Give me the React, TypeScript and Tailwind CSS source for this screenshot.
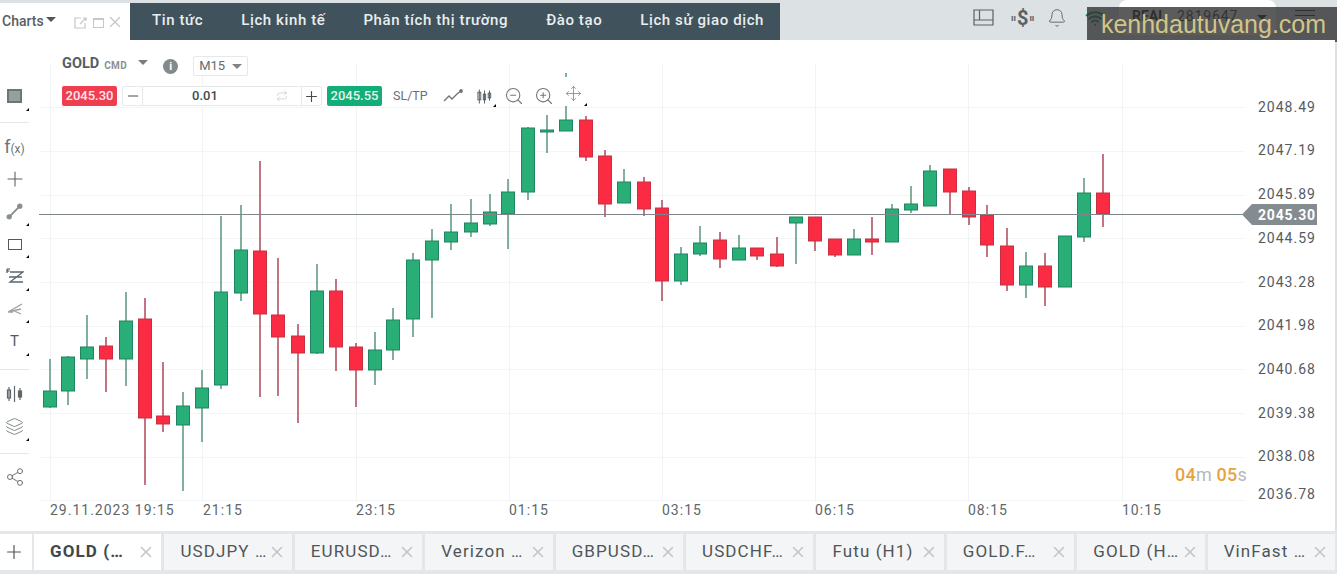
import { Bell, Layers, Minus, Move, Plus, Repeat, Share2, Wifi, X, ZoomIn, ZoomOut } from 'lucide-react'
import type { ReactNode } from 'react'

// cx, high, bodyTop, bodyBottom, low, colour
const candles: [number, number, number, number, number, 'g' | 'r'][] = [
  [50, 359, 391, 407, 408, 'g'],
  [68, 356, 357, 391, 405, 'g'],
  [87, 315, 347, 359, 379, 'g'],
  [106, 337, 346, 359, 392, 'r'],
  [126, 292, 321, 359, 386, 'g'],
  [145, 298, 319, 418, 485, 'r'],
  [163, 362, 416, 424, 432, 'r'],
  [183, 392, 406, 425, 491, 'g'],
  [202, 370, 388, 408, 442, 'g'],
  [221, 216, 292, 385, 389, 'g'],
  [241, 205, 250, 293, 301, 'g'],
  [260, 161, 251, 314, 397, 'r'],
  [278, 258, 315, 337, 396, 'r'],
  [298, 324, 336, 353, 423, 'r'],
  [317, 264, 291, 353, 354, 'g'],
  [336, 279, 291, 347, 371, 'r'],
  [356, 343, 347, 370, 407, 'r'],
  [375, 332, 350, 370, 385, 'g'],
  [393, 308, 320, 350, 360, 'g'],
  [413, 253, 260, 319, 337, 'g'],
  [432, 229, 241, 260, 318, 'g'],
  [451, 204, 232, 242, 250, 'g'],
  [471, 199, 223, 232, 237, 'g'],
  [490, 194, 212, 224, 226, 'g'],
  [508, 179, 192, 214, 249, 'g'],
  [528, 127, 128, 192, 200, 'g'],
  [547, 115, 130, 132, 153, 'g'],
  [566, 73, 120, 131, 131, 'g'],
  [586, 116, 120, 157, 161, 'r'],
  [605, 150, 156, 204, 217, 'r'],
  [624, 169, 182, 203, 203, 'g'],
  [644, 177, 182, 209, 216, 'r'],
  [662, 200, 208, 281, 301, 'r'],
  [681, 247, 254, 281, 285, 'g'],
  [700, 226, 243, 254, 256, 'g'],
  [720, 232, 240, 259, 268, 'r'],
  [739, 235, 248, 260, 260, 'g'],
  [757, 248, 248, 256, 260, 'r'],
  [777, 237, 254, 266, 267, 'r'],
  [796, 217, 217, 223, 264, 'g'],
  [815, 217, 217, 241, 251, 'r'],
  [835, 239, 239, 255, 257, 'r'],
  [854, 229, 239, 255, 255, 'g'],
  [872, 217, 239, 242, 255, 'r'],
  [892, 204, 209, 242, 242, 'g'],
  [911, 186, 204, 210, 213, 'g'],
  [930, 165, 171, 206, 206, 'g'],
  [950, 169, 169, 192, 214, 'r'],
  [969, 187, 191, 217, 225, 'r'],
  [987, 205, 215, 245, 257, 'r'],
  [1007, 228, 246, 285, 291, 'r'],
  [1026, 252, 266, 285, 298, 'g'],
  [1045, 253, 266, 287, 306, 'r'],
  [1065, 236, 236, 287, 287, 'g'],
  [1084, 178, 193, 237, 242, 'g'],
  [1103, 154, 193, 214, 227, 'r'],
]

const gridY = [107, 151, 195, 238, 282, 326, 369, 413, 457, 500]
const gridX = [50, 202, 356, 509, 662, 815, 968, 1122]
const prices: [string, number][] = [
  ['2048.49', 112], ['2047.19', 155], ['2045.89', 199], ['2044.59', 243], ['2043.28', 287],
  ['2041.98', 330], ['2040.68', 374], ['2039.38', 418], ['2038.08', 461], ['2036.78', 499],
]
const times: [string, number][] = [
  ['29.11.2023 19:15', 50], ['21:15', 203], ['23:15', 356], ['01:15', 509],
  ['03:15', 662], ['06:15', 815], ['08:15', 968], ['10:15', 1122],
]
const navItems = ['Tin tức', 'Lịch kinh tế', 'Phân tích thị trường', 'Đào tạo', 'Lịch sử giao dịch']
const tabs = ['GOLD (…', 'USDJPY …', 'EURUSD…', 'Verizon …', 'GBPUSD…', 'USDCHF…', 'Futu (H1)', 'GOLD.F…', 'GOLD (H…', 'VinFast …']

const Corner = () => (
  <span className="absolute right-0 bottom-[2px] border-b-[3px] border-l-[3px] border-b-black border-l-transparent" />
)

const Tool = ({ children, corner }: { children: ReactNode; corner?: boolean }) => (
  <div className="relative flex h-[32.5px] w-[29px] items-center justify-center text-[#5c6469]">
    {children}
    {corner && <Corner />}
  </div>
)

const LeftToolbar = () => (
  <div className="flex w-[39px] shrink-0 flex-col bg-white">
    <div className="pt-[40px]">
      <Tool corner>
        <span className="block h-[14px] w-[15px] border-2 border-[#6d7578] bg-[#93a09f]" />
      </Tool>
    </div>
    <div className="mt-[9.5px] w-[29px] border-t border-[#e6e9ea]" />
    <div className="pt-[7.25px]">
      <Tool>
        <span className="text-[18px] leading-none text-[#6b7377]">f<span className="text-[12px]">(x)</span></span>
      </Tool>
      <Tool><Plus size={24} strokeWidth={1.1} /></Tool>
      <Tool corner>
        <svg width="17" height="17" viewBox="0 0 16 16" fill="#868e91" stroke="#868e91">
          <line x1="3" y1="13" x2="13" y2="3" strokeWidth="1.8" />
          <circle cx="3" cy="13" r="2" />
          <circle cx="13" cy="3" r="2" />
        </svg>
      </Tool>
      <Tool corner><span className="block h-[11px] w-[14px] border-[1.5px] border-[#54595c]" /></Tool>
      <Tool corner>
        <svg width="18" height="17" viewBox="0 0 18 17" fill="none" stroke="#5c6469" strokeWidth="1.3">
          <path d="M4 4H17L4 14H17M3 9H16" />
          <path d="M1 1H4M1 1V5M1 3H3.5" strokeWidth="1.1" stroke="#444" />
        </svg>
      </Tool>
      <Tool corner>
        <svg width="16" height="14" viewBox="0 0 16 14" fill="none" stroke="#9aa1a4" strokeWidth="1.3">
          <path d="M1 10L15 2M1 10L14 7M5 8L14 12M1 10H6" />
        </svg>
      </Tool>
      <Tool corner><span className="text-[15px] leading-none text-[#555c60]">T</span></Tool>
    </div>
    <div className="mt-[10.75px] w-[29px] border-t border-[#e6e9ea]" />
    <div className="pt-[8.25px]">
      <Tool>
        <svg width="17" height="18" viewBox="0 0 17 18" fill="none" stroke="#5f676b" strokeWidth="1.2">
          <rect x="1.5" y="5" width="3" height="8" />
          <line x1="3" y1="2" x2="3" y2="16" />
          <line x1="8.5" y1="1" x2="8.5" y2="17" />
          <rect x="12.5" y="6" width="3" height="6" fill="#5f676b" />
          <line x1="14" y1="3" x2="14" y2="15" />
        </svg>
      </Tool>
      <Tool corner><Layers size={19} strokeWidth={1.2} className="text-[#7c8488]" /></Tool>
    </div>
    <div className="mt-[9.75px] w-[29px] border-t border-[#e6e9ea]" />
    <div className="pt-[7px]">
      <Tool><Share2 size={20} strokeWidth={1.2} className="text-[#6c7478]" /></Tool>
    </div>
  </div>
)

const ChartCanvas = () => (
  <svg viewBox="39 40 1296 491" width="1296" height="491" className="block">
    {gridY.map((y) => (
      <line key={y} x1="40" x2="1245" y1={y + 0.5} y2={y + 0.5} stroke="#f3f5f6" />
    ))}
    {gridX.map((x) => (
      <line key={x} x1={x + 0.5} x2={x + 0.5} y1="64" y2="500" stroke="#f1f4f4" />
    ))}
    {candles.map(([cx, high, top, bottom, low, c]) => (
      <g key={cx}>
        <line x1={cx} x2={cx} y1={high} y2={low} stroke={c === 'g' ? '#4f8d76' : '#a83a4c'} strokeWidth="1.4" />
        <rect x={cx - 6.5} y={top} width="13" height={bottom - top} fill={c === 'g' ? '#28ae76' : '#fb2b44'} stroke={c === 'g' ? '#1f8560' : '#c7303f'} />
      </g>
    ))}
    <line x1="39" x2="1245" y1="214.5" y2="214.5" stroke="#7f8588" />
    <polygon points="1242,214.5 1252,204 1317,204 1317,225 1252,225" fill="#858c90" />
    <text x="1258" y="220" fill="#fff" fontSize="14" fontWeight="700" letterSpacing="0.8">2045.30</text>
    {prices.map(([label, y]) => (
      <text key={label} x="1258" y={y} fill="#555b5f" fontSize="14" letterSpacing="1">{label}</text>
    ))}
    {times.map(([label, x]) => (
      <text key={label} x={x} y="515" fill="#60676b" fontSize="14" letterSpacing="1">{label}</text>
    ))}
  </svg>
)

const OrderBar = () => (
  <>
    <div className="absolute top-[16px] left-[23px] flex h-[20px] items-center">
      <span className="mb-[5px] text-[14.5px] font-bold text-[#585e62]">GOLD</span>
      <span className="mb-[2px] ml-[5px] text-[10px] font-bold tracking-[0.4px] text-[#8b9194]">CMD</span>
      <span className="mb-[7px] ml-[11px] border-x-[5px] border-t-[5px] border-x-transparent border-t-[#777e82]" />
      <span className="ml-[15px] flex size-[15px] items-center justify-center rounded-full bg-[#84898c] text-[11px] leading-none font-bold text-white">i</span>
      <div className="ml-[15px] flex h-[20px] w-[55px] items-center rounded-[2px] border border-[#e6e9ea] bg-white pl-[5px] text-[13px] text-[#666c70]">
        M15
        <span className="ml-[7px] border-x-[5px] border-t-[5px] border-x-transparent border-t-[#7f8589]" />
      </div>
    </div>
    <div className="absolute top-[46px] left-[23px] flex h-[20px] items-center">
      <div className="flex h-[20px] w-[55px] items-center justify-center rounded-[2px] bg-[#ef3e50] text-[13px] font-medium text-[#fbe9ea]">2045.30</div>
      <div className="ml-[5px] flex h-[20px] w-[200px] items-center rounded-[2px] border border-[#e6e9ea] bg-white text-[#444a4e]">
        <div className="flex h-full w-[20px] items-center justify-center border-r border-[#e6e9ea]"><Minus size={16} strokeWidth={1.6} /></div>
        <div className="relative flex h-full flex-1 items-center justify-center pr-[34px] text-[13px] font-medium">
          0.01
          <Repeat size={12} strokeWidth={1.4} className="absolute right-[13px] text-[#c3c8ca]" />
        </div>
        <div className="flex h-full w-[20px] items-center justify-center border-l border-[#e6e9ea]"><Plus size={17} strokeWidth={1.6} /></div>
      </div>
      <div className="ml-[5px] flex h-[20px] w-[55px] items-center justify-center rounded-[2px] bg-[#13ad78] text-[13px] font-medium text-[#e4f5ee]">2045.55</div>
      <span className="ml-[11px] text-[12.5px] text-[#6a7074]">SL/TP</span>
      <svg width="20" height="14" viewBox="0 0 20 14" fill="none" stroke="#6f7679" strokeWidth="1.4" className="ml-[15px]">
        <path d="M1 12L6 7L9 10L14 5L18 2" />
        <circle cx="18" cy="2" r="1.2" fill="#6f7679" />
      </svg>
      <div className="relative ml-[14px] flex h-[20px] w-[16px] items-center justify-center">
        <svg width="15" height="17" viewBox="0 0 16 17" fill="none" stroke="#5f676b" strokeWidth="1.1">
          <rect x="1" y="4" width="3" height="8" />
          <line x1="2.5" y1="1" x2="2.5" y2="16" />
          <line x1="8" y1="2" x2="8" y2="16" />
          <rect x="6.8" y="6" width="2.4" height="6" />
          <rect x="12" y="5" width="2.6" height="5" />
          <line x1="13.3" y1="2" x2="13.3" y2="13" />
        </svg>
        <span className="absolute -right-[3px] -bottom-[1px] border-b-[3px] border-l-[3px] border-b-black border-l-transparent" />
      </div>
      <ZoomOut size={20} strokeWidth={1.3} className="ml-[11px] text-[#70777a]" />
      <ZoomIn size={20} strokeWidth={1.3} className="ml-[10px] text-[#70777a]" />
      <div className="relative -mt-[9px] ml-[4px] flex h-[29px] w-[32px] items-end justify-center bg-white pb-[4px]">
        <Move size={17} strokeWidth={1.1} className="text-[#7c8488]" />
        <span className="absolute right-[3px] bottom-0 border-b-[3px] border-l-[3px] border-b-black border-l-transparent" />
      </div>
    </div>
  </>
)

const Header = () => (
  <header className="relative flex h-[40px] shrink-0 bg-[#dce1e4] pt-[3px]">
    <div className="flex w-[130px] items-start bg-white pt-[9px] pl-[2px]">
      <span className="text-[14px] leading-[18px] font-medium text-[#585e62]">Charts</span>
      <span className="mt-[5px] ml-[2px] border-x-[5px] border-t-[5px] border-x-transparent border-t-[#50565a]" />
      <svg width="13" height="12" viewBox="0 0 13 12" fill="none" stroke="#c3c8cb" strokeWidth="1.2" className="mt-[5px] ml-[18px]">
        <path d="M7 1H1V11H11V6M6 7L12 1M9 1H12V4" />
      </svg>
      <span className="mt-[6px] ml-[6px] block h-[10px] w-[11px] border border-t-2 border-[#c3c8cb]" />
      <X size={18} strokeWidth={1.8} className="mt-[1px] ml-[2px] text-[#c3c8cb]" />
    </div>
    <nav className="flex w-[650px] items-center gap-[38px] bg-[#40525c] pb-[3px] pl-[22px]">
      {navItems.map((item) => (
        <span key={item} className="text-[15px] font-medium tracking-[0.6px] text-[#e9eeef]">{item}</span>
      ))}
    </nav>
    <div className="relative flex flex-1 items-start">
      <svg width="21" height="17" viewBox="0 0 21 17" fill="none" stroke="#596266" strokeWidth="1.2" className="absolute top-[6px] left-[193px]">
        <path d="M1 1H20V16H1ZM1 11H20M6.5 1V11" />
      </svg>
      <span className="absolute top-[3px] left-[231px] flex items-center text-[20px] leading-[24px] font-bold text-[#596266]">
        <span className="mr-[1px] text-[9px]">ıı</span>$<span className="ml-[1px] text-[9px]">ıı</span>
      </span>
      <Bell size={20} strokeWidth={1.1} className="absolute top-[5px] left-[267px] text-[#596266]" />
      <Wifi size={20} strokeWidth={2.5} className="absolute top-[5px] left-[305px] text-[#1c8a5f]" />
      <div className="absolute -top-[3px] left-[339px] h-[35px] w-[157px] rounded-lg bg-white" />
      <span className="absolute top-[3px] left-[352px] text-[14px] font-bold text-[#222]">REAL</span>
      <span className="absolute top-[3px] left-[397px] text-[14px] tracking-[0.9px] text-[#333]">2819647</span>
      <span className="absolute top-[12px] left-[477px] border-x-[5px] border-t-[5px] border-x-transparent border-t-[#222]" />
      <div className="absolute top-[7px] left-[515px] flex w-[20px] flex-col gap-[4px]">
        <span className="h-px bg-[#222]" />
        <span className="h-px bg-[#222]" />
        <span className="h-px bg-[#222]" />
      </div>
    </div>
    <div className="absolute top-[7px] right-0 flex h-[35px] w-[250px] items-center justify-center bg-[#333]/80 pl-[3px] [font-family:'Liberation_Sans',sans-serif] text-[25px] text-[#d1c687]">
      kenhdautuvang.com
    </div>
  </header>
)

const TabBar = () => (
  <footer className="flex h-[43px] shrink-0 bg-[#e3e7e9] pt-[3px] pb-[4px]">
    <div className="flex w-[32px] shrink-0 items-center justify-center bg-white pr-[5px] text-[#50565a]"><Plus size={22} strokeWidth={1.3} /></div>
    <div className="ml-[2px] flex w-[1301px] gap-[3px]">
      {tabs.map((tab, i) => (
        <div key={tab} className={`relative flex min-w-0 flex-1 items-center pl-[16px] text-[17px] tracking-[1.1px] whitespace-nowrap ${i === 0 ? 'bg-white font-bold text-[#41474b]' : 'bg-[#f4f5f6] text-[#4f5559]'}`}>
          {tab}
          <X size={18} strokeWidth={2} className="absolute top-[9px] right-[6px] text-[#c0c4c6]" />
        </div>
      ))}
    </div>
  </footer>
)

export default function App() {
  return (
    <div className="flex h-[574px] w-[1337px] flex-col overflow-hidden bg-white [font-family:Roboto,sans-serif]">
      <Header />
      <main className="flex min-h-0 flex-1 bg-[#dce1e4] pr-[2px]">
        <LeftToolbar />
        <div className="relative flex-1 bg-white">
          <ChartCanvas />
          <OrderBar />
          <div className="absolute top-[424px] left-[1136px] text-[18px] leading-[22px] font-medium tracking-[0.2px] text-[#e8a33d]">
            04<span className="font-normal text-[#b5b9bb]">m</span> 05<span className="font-normal text-[#b5b9bb]">s</span>
          </div>
        </div>
      </main>
      <TabBar />
    </div>
  )
}
